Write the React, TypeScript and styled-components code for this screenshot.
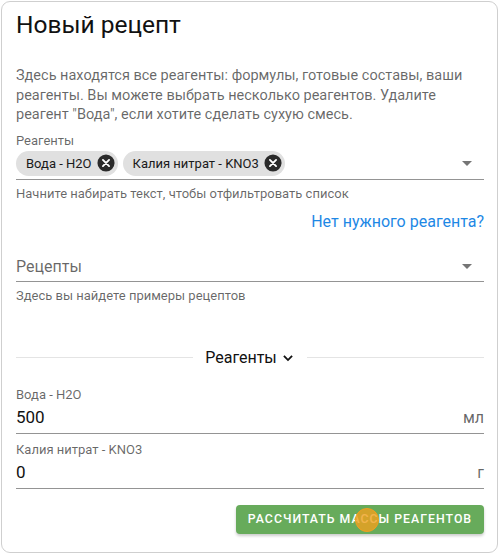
import React from "react";
import styled, { createGlobalStyle } from "styled-components";

const GlobalStyle = createGlobalStyle`
  html, body {
    margin: 0;
    padding: 0;
    background: #ffffff;
    font-family: Roboto, "Noto Sans", Arial, sans-serif;
  }
`;

const ArrowDropDown = () => (
  <svg width="10" height="5" viewBox="0 0 10 5">
    <path d="M0 0 L10 0 L5 5 Z" fill="#757575" />
  </svg>
);

const CancelIcon = () => (
  <svg width="18" height="18" viewBox="0 0 20 20">
    <circle cx="10" cy="10" r="9.5" fill="#2b2b2b" />
    <path d="M6.6 6.6 L13.4 13.4 M13.4 6.6 L6.6 13.4" stroke="#fff" strokeWidth="2.1" strokeLinecap="round" />
  </svg>
);

const Chevron = () => (
  <svg width="14" height="14" viewBox="0 0 24 24">
    <path d="M5 8.5 L12 15.5 L19 8.5" fill="none" stroke="#111" strokeWidth="3.2" />
  </svg>
);

const App: React.FC = () => {
  return (
    <>
      <GlobalStyle />
      <Card>
        <Title>Новый рецепт</Title>
        <Description>
          Здесь находятся все реагенты: формулы, готовые составы, ваши реагенты. Вы можете выбрать
          несколько реагентов. Удалите реагент "Вода", если хотите сделать сухую смесь.
        </Description>

        <SmallLabel>Реагенты</SmallLabel>
        <ChipField>
          <Chip>
            Вода - H2O
            <ChipDelete>
              <CancelIcon />
            </ChipDelete>
          </Chip>
          <Chip>
            Калия нитрат - KNO3
            <ChipDelete>
              <CancelIcon />
            </ChipDelete>
          </Chip>
          <Spacer />
          <ArrowSlot>
            <ArrowDropDown />
          </ArrowSlot>
        </ChipField>
        <Helper>Начните набирать текст, чтобы отфильтровать список</Helper>
        <LinkRow>
          <Link href="#">Нет нужного реагента?</Link>
        </LinkRow>

        <SelectField>
          <Placeholder>Рецепты</Placeholder>
          <ArrowSlot>
            <ArrowDropDown />
          </ArrowSlot>
        </SelectField>
        <Helper>Здесь вы найдете примеры рецептов</Helper>

        <Divider>
          <DividerLine />
          <DividerText>
            Реагенты <Chevron />
          </DividerText>
          <DividerLine />
        </Divider>

        <Amount $first>
          <AmountLabel>Вода - H2O</AmountLabel>
          <AmountInput>
            <Value>500</Value>
            <Unit>мл</Unit>
          </AmountInput>
        </Amount>
        <Amount>
          <AmountLabel>Калия нитрат - KNO3</AmountLabel>
          <AmountInput>
            <Value>0</Value>
            <Unit>г</Unit>
          </AmountInput>
        </Amount>

        <Actions>
          <Button>
            Рассчитать массы реагентов
            <Touch />
          </Button>
        </Actions>
      </Card>
    </>
  );
};

export default App;

const Card = styled.div`
  margin: 1px 2px 0 1px;
  height: 552px;
  box-sizing: border-box;
  border: 1px solid #cfcfcf;
  border-radius: 9px;
  padding: 8px 13px 0 14px;
  display: flex;
  flex-direction: column;
  color: rgba(0, 0, 0, 0.87);
`;

const Title = styled.h1`
  margin: 0;
  font-size: 24.5px;
  line-height: 30px;
  font-weight: 400;
  color: #111;
`;

const Description = styled.p`
  margin: 26px 0 0;
  font-size: 14.5px;
  line-height: 19.5px;
  color: rgba(0, 0, 0, 0.6);
`;

const SmallLabel = styled.div`
  margin-top: 8px;
  font-size: 13px;
  line-height: 16px;
  color: rgba(0, 0, 0, 0.6);
`;

const ChipField = styled.div`
  display: flex;
  align-items: center;
  gap: 5px;
  height: 29px;
  padding-bottom: 1px;
  border-bottom: 1px solid #949494;
`;

const Chip = styled.span`
  display: inline-flex;
  align-items: center;
  height: 25px;
  padding-left: 10px;
  border-radius: 13px;
  background: #e0e0e0;
  font-size: 13px;
  color: #1a1a1a;
`;

const ChipDelete = styled.span`
  display: inline-flex;
  margin: 0 3px 0 5px;
`;

const Spacer = styled.div`
  flex: 1;
`;

const ArrowSlot = styled.span`
  display: inline-flex;
  margin-right: 12px;
`;

const Helper = styled.div`
  margin-top: 6px;
  font-size: 13px;
  line-height: 16px;
  color: rgba(0, 0, 0, 0.6);
`;

const LinkRow = styled.div`
  display: flex;
  justify-content: flex-end;
  margin-top: 10px;
`;

const Link = styled.a`
  font-size: 16px;
  line-height: 20px;
  color: #1e88e5;
  text-decoration: none;
`;

const SelectField = styled.div`
  display: flex;
  align-items: center;
  justify-content: space-between;
  margin-top: 21px;
  height: 28px;
  border-bottom: 1px solid #949494;
`;

const Placeholder = styled.span`
  font-size: 16px;
  color: rgba(0, 0, 0, 0.6);
`;

const Divider = styled.div`
  display: flex;
  align-items: center;
  gap: 12px;
  margin-top: 44px;
`;

const DividerLine = styled.div`
  flex: 1;
  height: 1px;
  background: #e4e4e4;
`;

const DividerText = styled.span`
  display: inline-flex;
  align-items: center;
  gap: 4px;
  font-size: 16px;
  line-height: 20px;
  color: #111;
`;

const Amount = styled.div<{ $first?: boolean }>`
  display: flex;
  flex-direction: column;
  margin-top: ${(p) => (p.$first ? "19px" : "8px")};
`;

const AmountLabel = styled.div`
  font-size: 13px;
  line-height: 16px;
  color: rgba(0, 0, 0, 0.6);
`;

const AmountInput = styled.div`
  display: flex;
  align-items: center;
  justify-content: space-between;
  height: 27px;
  margin-top: 1px;
  padding-bottom: 2px;
  border-bottom: 1px solid #949494;
`;

const Value = styled.span`
  font-size: 17px;
  color: #111;
`;

const Unit = styled.span`
  font-size: 16px;
  color: rgba(0, 0, 0, 0.6);
`;

const Actions = styled.div`
  display: flex;
  justify-content: flex-end;
  margin-top: 16px;
`;

const Button = styled.button`
  position: relative;
  width: 248px;
  height: 29px;
  border: none;
  border-radius: 4px;
  background: #67ab5b;
  color: #ffffff;
  font-family: Roboto, Arial, sans-serif;
  font-size: 12.3px;
  font-weight: 500;
  letter-spacing: 1px;
  text-transform: uppercase;
  box-shadow: 0 2px 3px rgba(0, 0, 0, 0.2);
  cursor: pointer;
`;

const Touch = styled.span`
  position: absolute;
  left: 119px;
  top: 3px;
  width: 24px;
  height: 24px;
  box-sizing: border-box;
  border-radius: 50%;
  border: 1px solid #f0a020;
  background: rgba(240, 160, 30, 0.8);
`;
